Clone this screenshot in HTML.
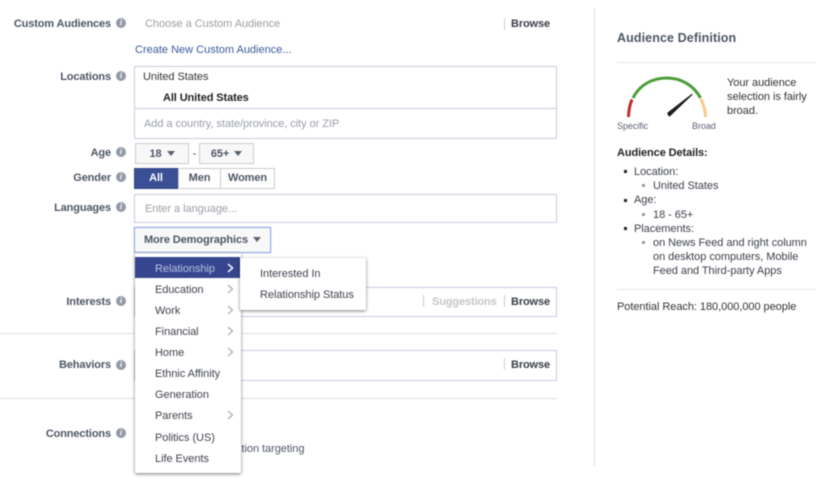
<!DOCTYPE html>
<html>
<head>
<meta charset="utf-8">
<style>
html,body{margin:0;padding:0;background:#fff;width:830px;height:500px;overflow:hidden}
#p{position:relative;width:830px;height:500px;font-family:"Liberation Sans",sans-serif;font-size:11px;color:#3b3f48;filter:blur(.45px)}
.t{position:absolute;white-space:nowrap;line-height:14px;margin-top:1px;letter-spacing:-.05px}
.l{position:absolute;white-space:nowrap;line-height:14px;margin-top:1px;right:719px;font-weight:bold;color:#4e5665;letter-spacing:-.13px}
.i{position:absolute;left:116px;width:10px;height:10px;border-radius:50%;background:#9399a6;color:#fff;font:italic bold 8px/10px "Liberation Serif",serif;text-align:center}
.b{position:absolute;border:1px solid #c5cde0;box-sizing:border-box;background:#fff}
.h{position:absolute;height:1px;background:#dcdee3}
.ph{color:#9a9ea6}
.btn{position:absolute;box-sizing:border-box;border:1px solid #ccc;background:#f8f8f9;font-weight:bold;color:#4e5665;text-align:center;letter-spacing:-.1px}
.c{display:inline-block;width:0;height:0;border:4px solid transparent;border-top:5px solid #5b6270;border-bottom:0;margin-left:5px;vertical-align:1px}
.sep{position:absolute;width:1px;height:12px;background:#c5cde0}
.br{position:absolute;left:511px;font-weight:bold;color:#3b3f48;letter-spacing:-.13px;line-height:14px;margin-top:1px}
.m{position:absolute;left:155px;line-height:14px;margin-top:1px;white-space:nowrap;color:#3f434c;letter-spacing:-.05px}
</style>
</head>
<body>
<div id="p">
<div class="l" style="top:16px">Custom Audiences</div><div class="i" style="top:18px">i</div>
<div class="t ph" style="left:145px;top:16px">Choose a Custom Audience</div>
<div class="sep" style="left:504px;top:18px"></div>
<div class="br" style="top:16px">Browse</div>
<div class="t" style="left:135px;top:42px;color:#3b5998;letter-spacing:0">Create New Custom Audience...</div>

<div class="l" style="top:69px">Locations</div><div class="i" style="top:71px">i</div>
<div class="b" style="left:134px;top:66px;width:423px;height:73px"></div>
<div class="h" style="left:134px;top:108px;width:423px;background:#c5cde0"></div>
<div class="t" style="left:143px;top:69px;color:#333">United States</div>
<div class="t" style="left:163px;top:90px;font-weight:bold;color:#222;letter-spacing:-.1px">All United States</div>
<div class="t ph" style="left:144px;top:116px">Add a country, state/province, city or ZIP</div>

<div class="l" style="top:145px">Age</div><div class="i" style="top:147px">i</div>
<div class="btn" style="left:135px;top:143px;width:54px;height:21px;line-height:20px">18<span class="c"></span></div>
<div class="t" style="left:191px;top:146px;width:7px;text-align:center">-</div>
<div class="btn" style="left:199px;top:143px;width:55px;height:21px;line-height:20px">65+<span class="c"></span></div>

<div class="l" style="top:170px">Gender</div><div class="i" style="top:172px">i</div>
<div class="btn" style="left:134px;top:168px;width:44px;height:21px;line-height:19px;background:#3b4f94;border-color:#34478a;color:#fff">All</div>
<div class="btn" style="left:178px;top:168px;width:43px;height:21px;line-height:19px;background:#fff">Men</div>
<div class="btn" style="left:220px;top:168px;width:55px;height:21px;line-height:19px;background:#fff">Women</div>

<div class="l" style="top:200px">Languages</div><div class="i" style="top:202px">i</div>
<div class="b" style="left:134px;top:194px;width:423px;height:29px"></div>
<div class="t ph" style="left:145px;top:201px">Enter a language...</div>

<div class="btn" style="left:134px;top:227px;width:137px;height:26px;line-height:24px;border:1px solid #8fa8e6;box-shadow:0 0 1px #8fa8e6">More Demographics<span class="c"></span></div>

<div class="l" style="top:294px">Interests</div><div class="i" style="top:296px">i</div>
<div class="b" style="left:134px;top:287px;width:423px;height:30px"></div>
<div class="sep" style="left:423px;top:295px"></div>
<div class="t" style="left:432px;top:294px;font-weight:bold;color:#c4c6ca;letter-spacing:-.13px">Suggestions</div>
<div class="sep" style="left:504px;top:295px"></div>
<div class="br" style="top:294px">Browse</div>

<div class="h" style="left:0;top:333px;width:557px"></div>

<div class="l" style="top:357px">Behaviors</div><div class="i" style="top:360px">i</div>
<div class="b" style="left:134px;top:350px;width:423px;height:31px"></div>
<div class="sep" style="left:504px;top:358px"></div>
<div class="br" style="top:357px">Browse</div>

<div class="h" style="left:0;top:398px;width:557px"></div>

<div class="l" style="top:426px">Connections</div><div class="i" style="top:428px">i</div>
<div class="t" style="left:190px;top:441px;color:#4e5665">Add a location targeting</div>

<!-- dropdown -->
<div style="position:absolute;left:135px;top:253px;width:106px;height:220px;background:#fff;box-shadow:0 1px 3px rgba(0,0,0,.55);border-radius:1px"></div>
<div style="position:absolute;left:135px;top:257px;width:105px;height:21px;background:#35468f"></div>
<div class="m" style="top:261px;color:#b9c2e2">Relationship</div>
<div class="m" style="top:282px">Education</div>
<div class="m" style="top:303px">Work</div>
<div class="m" style="top:324px">Financial</div>
<div class="m" style="top:345px">Home</div>
<div class="m" style="top:366px">Ethnic Affinity</div>
<div class="m" style="top:387px">Generation</div>
<div class="m" style="top:408px">Parents</div>
<div class="m" style="top:430px">Politics (US)</div>
<div class="m" style="top:451px">Life Events</div>
<svg style="position:absolute;left:0;top:0" width="830" height="500" fill="none">
<g stroke="#aeb1b7" stroke-width="1.300">
<path d="M228 285l4.500 4-4.500 4"/><path d="M228 306l4.500 4-4.500 4"/><path d="M228 327l4.500 4-4.500 4"/><path d="M228 348l4.500 4-4.500 4"/><path d="M228 411l4.500 4-4.500 4"/>
</g>
<path d="M228 264l4.500 4-4.500 4" stroke="#fff" stroke-width="1.500"/>
</svg>

<div style="position:absolute;left:240px;top:258px;width:126px;height:52px;background:#fff;box-shadow:0 1px 3px rgba(0,0,0,.5);border-radius:1px"></div>
<div class="t" style="left:260px;top:266px;color:#3f434c">Interested In</div>
<div class="t" style="left:260px;top:287px;color:#3f434c">Relationship Status</div>

<!-- right column -->
<div style="position:absolute;left:594px;top:8px;width:1px;height:458px;background:#dcdee3"></div>
<div class="t" style="left:617px;top:30px;font-size:12.500px;font-weight:bold;color:#4e5665;line-height:15px;letter-spacing:.1px">Audience Definition</div>
<div class="h" style="left:617px;top:62px;width:199px;background:#e6e7ea"></div>

<svg style="position:absolute;left:610px;top:65px" width="110" height="62" fill="none">
<path d="M18.500 52C18.600 46 19.600 40 22 34.500" stroke="#bf2c2c" stroke-width="3"/>
<path d="M23 33C29.500 20 42 13 57 13C71 13 84 20.500 90.500 33" stroke="#4c9e38" stroke-width="3"/>
<path d="M91 34C94 40 95.300 46 95.600 52" stroke="#f9c98a" stroke-width="3"/>
<path d="M59.500 51C58.500 50 57.800 49 58 48L82 29.500Z" fill="#1c1d22" stroke="#1c1d22" stroke-width="1.200" stroke-linejoin="round"/>
</svg>
<div class="t" style="left:617px;top:119px;font-size:9px;line-height:12px;color:#5a6170">Specific</div>
<div class="t" style="left:692px;top:119px;font-size:9px;line-height:12px;color:#5a6170">Broad</div>
<div class="t" style="left:727px;top:75px;color:#333">Your audience</div>
<div class="t" style="left:727px;top:89px;color:#333">selection is fairly</div>
<div class="t" style="left:727px;top:103px;color:#333">broad.</div>

<div class="t" style="left:617px;top:145px;font-weight:bold;color:#222;letter-spacing:-.1px">Audience Details:</div>
<div style="position:absolute;left:624px;top:170px;width:3px;height:3px;background:#222"></div>
<div class="t" style="left:634px;top:164px;color:#3b3f48">Location:</div>
<div style="position:absolute;left:642px;top:184px;width:3px;height:3px;border-radius:50%;background:#8a8d94"></div>
<div class="t" style="left:653px;top:178px;color:#3b3f48">United States</div>
<div style="position:absolute;left:624px;top:199px;width:3px;height:3px;background:#222"></div>
<div class="t" style="left:634px;top:192px;color:#3b3f48">Age:</div>
<div style="position:absolute;left:642px;top:213px;width:3px;height:3px;border-radius:50%;background:#8a8d94"></div>
<div class="t" style="left:653px;top:207px;color:#3b3f48">18 - 65+</div>
<div style="position:absolute;left:624px;top:227px;width:3px;height:3px;background:#222"></div>
<div class="t" style="left:634px;top:221px;color:#3b3f48">Placements:</div>
<div style="position:absolute;left:642px;top:241px;width:3px;height:3px;border-radius:50%;background:#8a8d94"></div>
<div class="t" style="left:653px;top:235px;color:#3b3f48">on News Feed and right column</div>
<div class="t" style="left:653px;top:249px;color:#3b3f48">on desktop computers, Mobile</div>
<div class="t" style="left:653px;top:263px;color:#3b3f48">Feed and Third-party Apps</div>
<div class="h" style="left:617px;top:289px;width:199px;background:#e6e7ea"></div>
<div class="t" style="left:617px;top:299px;color:#333">Potential Reach: 180,000,000 people</div>
</div>
</body>
</html>
